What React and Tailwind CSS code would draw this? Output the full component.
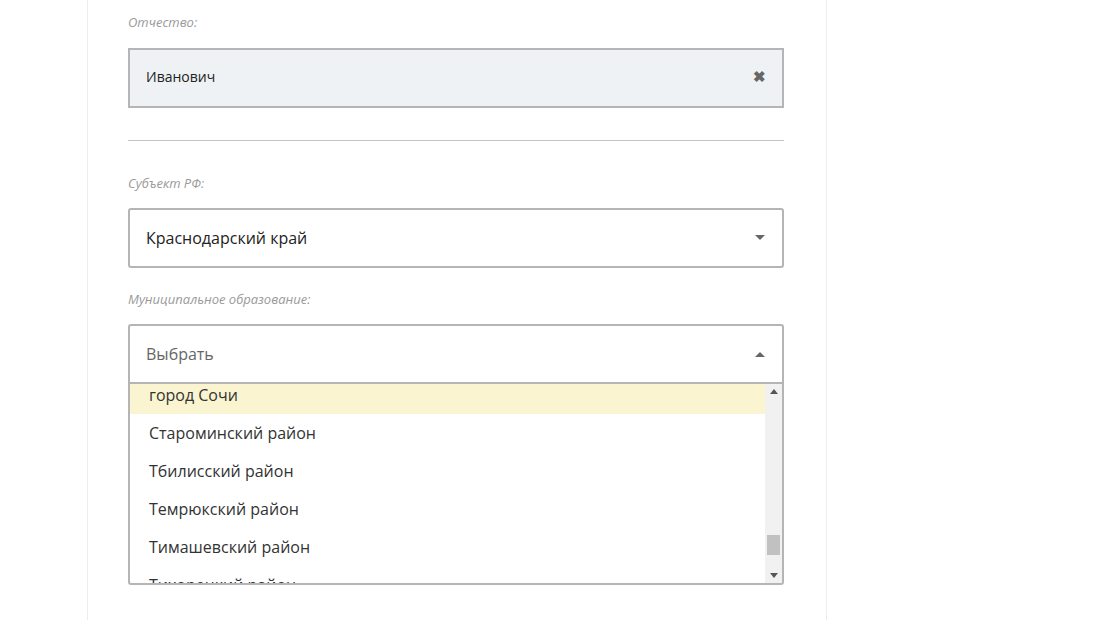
import React from 'react';

const items = ['город Сочи', 'Староминский район', 'Тбилисский район', 'Темрюкский район', 'Тимашевский район', 'Тихорецкий район'];

export default function App() {
  return (
    <div className="min-h-[620px] bg-white flex" style={{ fontFamily: '"Open Sans", "Noto Sans", sans-serif' }}>
      <div className="ml-[87px] w-[740px] h-[620px] border-x border-[#ededed] pl-[40px] pr-[42px] pt-[13px] overflow-hidden">
        <div className="text-[13px] italic text-[#9a9a9a] h-[18px] leading-[18px]">Отчество:</div>
        <div className="mt-[17px] h-[60px] border-2 border-[#b5b5b5] bg-[#eef2f5] flex items-center justify-between px-[16px] pb-[4px]">
          <span className="text-[14px] text-[#222]">Иванович</span>
          <span className="text-[#666] text-[15px] font-bold">✖</span>
        </div>
        <div className="mt-[32px] border-t border-[#c4c4c4]" />
        <div className="mt-[33px] text-[13px] italic text-[#9a9a9a] h-[18px] leading-[18px]">Субъект РФ:</div>
        <div className="mt-[16px] h-[60px] border-2 border-[#b5b5b5] rounded-[3px] flex items-center justify-between px-[16px]">
          <span className="text-[16px] text-[#222]">Краснодарский край</span>
          <svg width="10" height="6" viewBox="0 0 10 6" className="mr-[1px]"><path d="M0 0h10L5 5z" fill="#666" /></svg>
        </div>
        <div className="mt-[22px] text-[13px] italic text-[#9a9a9a] h-[18px] leading-[18px]">Муниципальное образование:</div>
        <div className="relative mt-[16px]">
          <div className="h-[60px] border-2 border-[#b5b5b5] rounded-t-[3px] flex items-center justify-between px-[16px]">
            <span className="text-[16px] text-[#666]">Выбрать</span>
            <svg width="10" height="6" viewBox="0 0 10 6" className="mr-[1px]"><path d="M0 6h10L5 1z" fill="#666" /></svg>
          </div>
          <div className="absolute left-0 right-0 top-[58px] h-[203px] bg-white border-2 border-[#b5b5b5] rounded-b-[3px] flex overflow-hidden">
            <div className="flex-1 overflow-hidden">
              <div className="mt-[-8px]">
                {items.map((t, i) => (
                  <div key={t} className={`h-[38px] flex items-center pl-[19px] text-[16px] text-[#333] ${i === 0 ? 'bg-[#faf4d0]' : ''}`}>{t}</div>
                ))}
              </div>
            </div>
            <div className="w-[17px] bg-[#f1f1f1] flex flex-col items-center justify-between py-[5px]">
              <svg width="8" height="5" viewBox="0 0 8 5"><path d="M0 5h8L4 0z" fill="#555" /></svg>
              <div className="flex-1 w-full relative">
                <div className="absolute left-[2px] right-[2px] bottom-[18px] h-[20px] bg-[#c1c1c1]" />
              </div>
              <svg width="8" height="5" viewBox="0 0 8 5"><path d="M0 0h8L4 5z" fill="#555" /></svg>
            </div>
          </div>
        </div>
      </div>
    </div>
  );
}
